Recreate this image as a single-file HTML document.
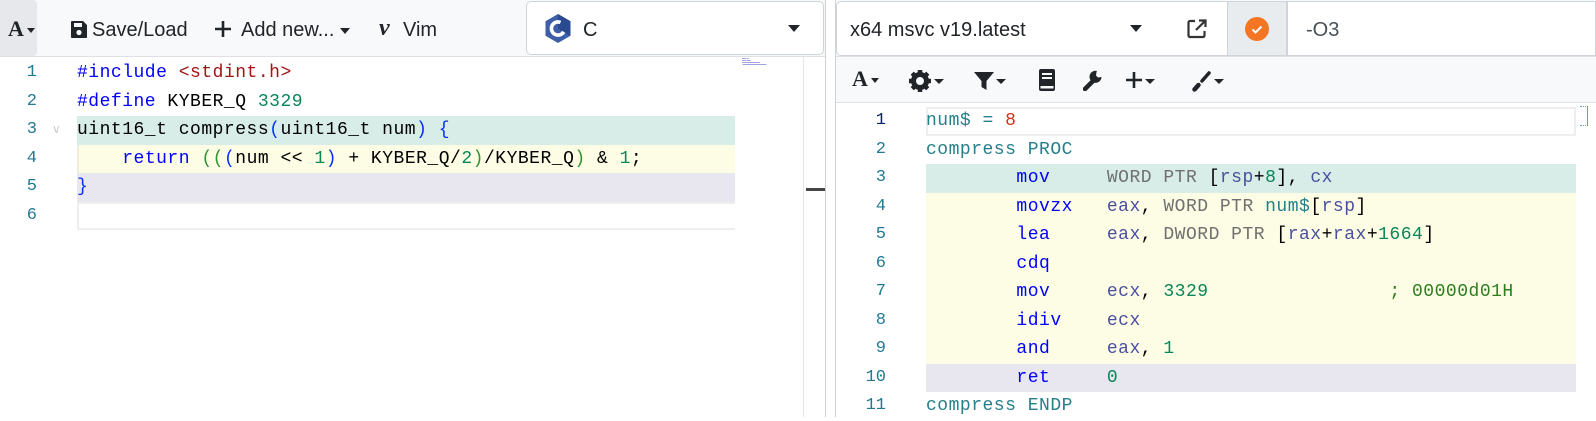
<!DOCTYPE html>
<html><head><meta charset="utf-8"><style>
*{margin:0;padding:0;box-sizing:border-box}
body{width:1596px;height:417px;overflow:hidden;background:#fff;font-family:"Liberation Sans",sans-serif;position:relative;color:#212529}
.abs{position:absolute}
.tb{background:#f8f9fa}
.code{font-family:"Liberation Mono",monospace;font-size:18px;letter-spacing:0.5px;white-space:pre;line-height:28.5px}
.row{position:absolute;height:28.5px}
.ln{position:absolute;font-family:"Liberation Mono",monospace;font-size:17px;line-height:28.5px;color:#237893;text-align:right;width:40px}
.k{color:#0000ff}.s{color:#a31515}.n{color:#098658}.g{color:#319331}.b{color:#0431fa}
.lb{color:#267f8a}.r{color:#c8371e}.gy{color:#707070}.rg{color:#4a4f9e}.cm{color:#2e7d1e}
.btn{position:absolute;top:19px;font-size:20px;color:#212529}
.caret{display:inline-block;width:0;height:0;border-left:5px solid transparent;border-right:5px solid transparent;border-top:6px solid #212529;vertical-align:middle}
</style></head><body>
<!-- left toolbar -->
<div class="abs tb" style="left:0;top:0;width:825px;height:57px;border-bottom:1px solid #dee2e6"></div>
<div class="abs" style="left:0;top:0;width:37px;height:56px;background:#e6e8eb;border-radius:0 4px 4px 0"></div>
<div class="btn" style="left:8px;top:16px;font-family:'Liberation Serif',serif;font-weight:bold;font-size:22px">A<span class="caret" style="margin-left:3px;border-width:5px 4px 0 4px"></span></div>
<svg class="abs" style="left:70px;top:20px" width="18" height="19" viewBox="0 0 18 19"><path d="M1 2a1 1 0 0 1 1-1h11l4 4v12a1 1 0 0 1-1 1H2a1 1 0 0 1-1-1z" fill="#212529"/><rect x="4" y="3" width="8" height="4" fill="#f8f9fa"/><circle cx="9" cy="12.5" r="2.6" fill="#f8f9fa"/></svg>
<div class="btn" style="left:92px">Save/Load</div>
<svg class="abs" style="left:214px;top:20px" width="18" height="18"><path d="M9 1v16M1 9h16" stroke="#212529" stroke-width="2.6"/></svg>
<div class="btn" style="left:241px">Add new...<span class="caret" style="margin-left:6px"></span></div>
<div class="btn" style="left:379px;font-weight:bold;font-style:italic;font-family:'Liberation Serif',serif;font-size:24px;top:15px">v</div>
<div class="btn" style="left:403px">Vim</div>
<div class="abs" style="left:526px;top:1px;width:298px;height:54px;background:#fff;border:1px solid #ced4da;border-radius:5px"></div>
<svg class="abs" style="left:545px;top:14px" width="26" height="29" viewBox="0 0 26 29"><path d="M13 0L25.5 7.2V21.8L13 29L0.5 21.8V7.2Z" fill="#3d5ea8"/><path d="M13 0L25.5 7.2V21.8L13 14.5Z" fill="#2b4a8f"/><circle cx="13" cy="14.5" r="6.6" fill="none" stroke="#fff" stroke-width="3.6" stroke-dasharray="30 12" transform="rotate(30 13 14.5)"/></svg>
<div class="btn" style="left:583px">C</div>
<span class="caret abs" style="left:788px;top:25px;border-width:7px 6px 0 6px"></span>

<!-- left editor -->
<div class="abs" style="left:803px;top:57px;width:1px;height:360px;background:#e6e6e6"></div>
<div class="abs" style="left:825px;top:0;width:1px;height:417px;background:#d0d0d0"></div>
<div class="abs" style="left:835px;top:0;width:1px;height:417px;background:#d0d0d0"></div>
<div class="abs" style="left:806px;top:188px;width:19px;height:3px;background:#444"></div>
<div class="abs" style="left:742px;top:58px;width:45px;height:10px;font-size:2px;line-height:2px;color:#66c">▬▬ ▬<br>▬▬ ▬▬<br>▬▬▬▬▬▬▬▬▬<br>&nbsp;▬▬▬▬▬▬▬▬▬▬▬▬</div>

<div class="row" style="left:77px;top:116px;width:658px;background:#d8ede8"></div>
<div class="row" style="left:77px;top:144.5px;width:658px;background:#fdfde6;border-left:2px solid #eeeedc"></div>
<div class="row" style="left:77px;top:173px;width:658px;background:#e8e7f0"></div>
<div class="row" style="left:77px;top:201.5px;width:658px;border:2px solid #eeeeee;border-right:none"></div>
<div class="ln" style="left:-3px;top:59px">1</div>
<div class="ln" style="left:-3px;top:87.5px">2</div>
<div class="ln" style="left:-3px;top:116px">3</div>
<div class="ln" style="left:-3px;top:144.5px">4</div>
<div class="ln" style="left:-3px;top:173px">5</div>
<div class="ln" style="left:-3px;top:201.5px">6</div>
<div class="abs" style="left:52px;top:122px;color:#ccc;font-size:12px">&#8744;</div>
<div class="abs code" style="left:77px;top:59px;color:#000"><span class="k">#include</span> <span class="s">&lt;stdint.h&gt;</span>
<span class="k">#define</span> KYBER_Q <span class="n">3329</span>
uint16_t compress<span class="b">(</span>uint16_t num<span class="b">)</span> <span class="b">{</span>
    <span class="k">return</span> <span class="g">((</span><span class="b">(</span>num &lt;&lt; <span class="n">1</span><span class="b">)</span> + KYBER_Q/<span class="n">2</span><span class="g">)</span>/KYBER_Q<span class="g">)</span> &amp; <span class="n">1</span>;
<span class="b">}</span>
</div>

<!-- right header -->
<div class="abs tb" style="left:836px;top:0;width:760px;height:103px;border-bottom:1px solid #dee2e6"></div>
<div class="abs" style="left:836px;top:0;width:760px;height:57px;border-bottom:1px solid #dee2e6"></div>
<div class="abs" style="left:836px;top:1px;width:391px;height:55px;background:#fff;border:1px solid #ced4da;border-right:none;border-radius:5px 0 0 5px"></div>
<div class="btn" style="left:850px">x64 msvc v19.latest</div>
<span class="caret abs" style="left:1130px;top:25px;border-width:7px 6px 0 6px"></span>
<svg class="abs" style="left:1186px;top:18px" width="22" height="22" viewBox="0 0 22 22"><path d="M9 3H4a1.5 1.5 0 0 0-1.5 1.5v13A1.5 1.5 0 0 0 4 19h13a1.5 1.5 0 0 0 1.5-1.5V13" fill="none" stroke="#333" stroke-width="2.2"/><path d="M13 2.5h6.5V9M19.5 2.5L10 12" fill="none" stroke="#333" stroke-width="2.2"/></svg>
<div class="abs" style="left:1227px;top:1px;width:60px;height:55px;background:#e9ecef;border:1px solid #ced4da"></div>
<svg class="abs" style="left:1245px;top:17px" width="24" height="24"><circle cx="12" cy="12" r="12" fill="#f47625"/><path d="M7.5 12.5l3 3 6-6" fill="none" stroke="#fff" stroke-width="2"/></svg>
<div class="abs" style="left:1287px;top:1px;width:309px;height:55px;background:#fff;border:1px solid #ced4da"></div>
<div class="btn" style="left:1306px;color:#495057">-O3</div>

<!-- right toolbar icons -->
<div class="btn" style="left:852px;top:66px;font-family:'Liberation Serif',serif;font-weight:bold;font-size:22px">A<span class="caret" style="margin-left:3px;border-width:5px 4px 0 4px"></span></div>
<svg class="abs" style="left:909px;top:70px" width="22" height="22" viewBox="0 0 22 22"><circle cx="11" cy="11" r="6.5" fill="none" stroke="#212529" stroke-width="5"/><path d="M11 0v22M0 11h22M3.2 3.2l15.6 15.6M18.8 3.2L3.2 18.8" stroke="#212529" stroke-width="4.5" stroke-dasharray="4 14 4"/></svg>
<span class="caret abs" style="left:934px;top:79px;border-width:5px 5px 0 5px"></span>
<svg class="abs" style="left:974px;top:71px" width="20" height="20"><path d="M0 1h20L12.5 10v9L7.5 16V10z" fill="#212529"/></svg>
<span class="caret abs" style="left:996px;top:79px;border-width:5px 5px 0 5px"></span>
<svg class="abs" style="left:1039px;top:69px" width="16" height="22"><rect x="0" y="0" width="16" height="22" rx="2" fill="#212529"/><rect x="3" y="4" width="10" height="2" fill="#f8f9fa"/><rect x="3" y="8" width="10" height="2" fill="#f8f9fa"/><rect x="1.5" y="17" width="13" height="2.5" fill="#f8f9fa"/></svg>
<svg class="abs" style="left:1083px;top:69px" width="20" height="22" viewBox="0 0 20 22"><path d="M2 20l9-9" stroke="#212529" stroke-width="4.5" stroke-linecap="round"/><path d="M14 2a6 6 0 1 0 4.5 6l-3.5 0.5-2-2 0.5-3.5z" fill="#212529"/></svg>
<svg class="abs" style="left:1125px;top:71px" width="18" height="18"><path d="M9 1v16M1 9h16" stroke="#212529" stroke-width="2.6"/></svg>
<span class="caret abs" style="left:1145px;top:79px;border-width:5px 5px 0 5px"></span>
<svg class="abs" style="left:1192px;top:70px" width="20" height="22" viewBox="0 0 20 22"><path d="M2.5 19.5l4-4.5" stroke="#212529" stroke-width="4.5" stroke-linecap="round"/><path d="M10 11l7-8" stroke="#212529" stroke-width="3.5" stroke-linecap="round"/></svg>
<span class="caret abs" style="left:1214px;top:79px;border-width:5px 5px 0 5px"></span>

<!-- right editor -->
<div class="row" style="left:926px;top:107px;width:650px;border:2px solid #eeeeee"></div>
<div class="row" style="left:926px;top:164px;width:650px;background:#d8ede8"></div>
<div class="row" style="left:926px;top:192.5px;width:650px;height:171px;background:#fdfde6"></div>
<div class="row" style="left:926px;top:363.5px;width:650px;background:#e8e7f0"></div>
<div class="abs" style="left:1580px;top:106px;width:8px;height:20px;border-right:1px solid #88c;border-top:1px dotted #5aa;border-bottom:1px dotted #5aa"></div>
<div class="ln" style="left:846px;top:107px;color:#0b216f">1</div>
<div class="ln" style="left:846px;top:135.5px">2</div>
<div class="ln" style="left:846px;top:164px">3</div>
<div class="ln" style="left:846px;top:192.5px">4</div>
<div class="ln" style="left:846px;top:221px">5</div>
<div class="ln" style="left:846px;top:249.5px">6</div>
<div class="ln" style="left:846px;top:278px">7</div>
<div class="ln" style="left:846px;top:306.5px">8</div>
<div class="ln" style="left:846px;top:335px">9</div>
<div class="ln" style="left:846px;top:363.5px">10</div>
<div class="ln" style="left:846px;top:392px">11</div>
<div class="abs code" style="left:926px;top:107px;color:#000"><span class="lb">num$ =</span> <span class="r">8</span>
<span class="lb">compress PROC</span>
        <span class="k">mov</span>     <span class="gy">WORD PTR</span> [<span class="rg">rsp</span>+<span class="n">8</span>], <span class="rg">cx</span>
        <span class="k">movzx</span>   <span class="rg">eax</span>, <span class="gy">WORD PTR</span> <span class="lb">num$</span>[<span class="rg">rsp</span>]
        <span class="k">lea</span>     <span class="rg">eax</span>, <span class="gy">DWORD PTR</span> [<span class="rg">rax</span>+<span class="rg">rax</span>+<span class="n">1664</span>]
        <span class="k">cdq</span>
        <span class="k">mov</span>     <span class="rg">ecx</span>, <span class="n">3329</span>                <span class="cm">; 00000d01H</span>
        <span class="k">idiv</span>    <span class="rg">ecx</span>
        <span class="k">and</span>     <span class="rg">eax</span>, <span class="n">1</span>
        <span class="k">ret</span>     <span class="n">0</span>
<span class="lb">compress ENDP</span></div>
</body></html>
